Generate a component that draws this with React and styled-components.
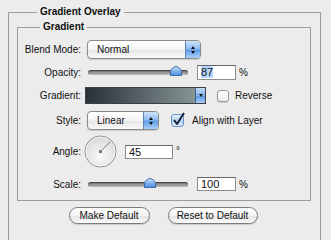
import React from "react";
import styled, { createGlobalStyle } from "styled-components";

const GlobalStyle = createGlobalStyle`
    html, body {
        margin: 0;
        padding: 0;
        background: #ececec;
        overflow: hidden;
    }
    body {
        padding-top: 5px;
        font-family: "Liberation Sans", Arial, sans-serif;
        font-size: 10px;
        color: #111;
    }
`

const Outer = styled.fieldset`
    box-sizing: border-box;
    width: 313px;
    height: 245px;
    margin: 0 0 0 8px;
    padding: 1px 9px 0 8px;
    border: 1px solid #9c9c9c;
    min-width: 0;
`

const Title = styled.legend`
    margin-left: ${p => p.$ml}px;
    padding: 0 3px;
    height: 14px;
    line-height: 14px;
    font-weight: bold;
    font-size: 10px;
`

const Inner = styled.fieldset`
    box-sizing: border-box;
    margin: 0;
    padding: 6px 0 9px 0;
    border: 1px solid #9c9c9c;
    min-width: 0;
`

const Row = styled.div`
    display: grid;
    grid-template-columns: 63px 1fr;
    column-gap: 6px;
    align-items: center;
    height: ${p => p.$h}px;
    margin-top: ${p => p.$mt || 0}px;
`

const Label = styled.span`
    text-align: right;
    white-space: nowrap;
`

const Controls = styled.div`
    display: flex;
    align-items: center;
    height: 100%;
`

const Popup = styled.div`
    box-sizing: border-box;
    display: flex;
    align-items: stretch;
    width: ${p => p.$w}px;
    height: 19px;
    border: 1px solid #8a8a8a;
    border-radius: 4px;
    overflow: hidden;
    background: linear-gradient(#ffffff, #f3f3f3 50%, #e6e6e6 52%, #f8f8f8);
    box-shadow: 0 1px 1px rgba(0, 0, 0, 0.15);
`

const PopupText = styled.span`
    flex: 1;
    padding-left: 9px;
    line-height: 17px;
`

const PopupArrows = styled.span`
    width: 14px;
    display: flex;
    flex-direction: column;
    align-items: center;
    justify-content: center;
    gap: 2px;
    border-left: 1px solid #5d82b8;
    background: linear-gradient(#cfe3fa, #8ab8ee 48%, #5d99e4 52%, #a9d0fa);
`

const Tri = styled.span`
    width: 0;
    height: 0;
    border-left: 2.5px solid transparent;
    border-right: 2.5px solid transparent;
    ${p => p.$up ? "border-bottom: 3px solid #111;" : "border-top: 3px solid #111;"}
`

const SliderBox = styled.div`
    position: relative;
    width: 100px;
    height: 5px;
    margin: 0 9px 0 1px;
    border-radius: 3px;
    background: linear-gradient(#6a6a6a, #9a9a9a 60%, #b9b9b9);
    box-shadow: inset 0 1px 1px rgba(0, 0, 0, 0.4);
`

const Thumb = styled.svg`
    position: absolute;
    top: -4px;
    width: 12px;
    height: 10px;
    margin-left: -6px;
`

const Field = styled.div`
    box-sizing: border-box;
    width: ${p => p.$w}px;
    height: ${p => p.$h || 15}px;
    padding-left: 3px;
    border: 1px solid #8c8c8c;
    border-top-color: #666;
    background: #fff;
    line-height: ${p => (p.$h || 15) - 2}px;
    font-size: 11px;
`

const Selected = styled.span`
    background: #b5d5ff;
`

const Unit = styled.span`
    margin-left: 3px;
    font-size: 10px;
    align-self: ${p => p.$top ? "flex-start" : "center"};
    margin-top: ${p => p.$top ? "10px" : "0"};
`

const Swatch = styled.div`
    box-sizing: border-box;
    display: flex;
    width: 121px;
    height: 17px;
    margin-left: -2px;
    border: 1px solid #3a3f44;
    background: linear-gradient(90deg, #283238, #5b676b 50%, #8f9d9c);
`

const SwatchArrow = styled.span`
    margin-left: auto;
    width: 9px;
    display: flex;
    align-items: center;
    justify-content: center;
    border-left: 1px solid #3a5d93;
    background: linear-gradient(#c4dcf8, #7fb0ea 50%, #5a96e2 52%, #a9cdf7);
`

const Check = styled.label`
    display: flex;
    align-items: center;
    gap: 6px;
    margin-left: ${p => p.$ml}px;
    white-space: nowrap;
`

const Box = styled.span`
    box-sizing: border-box;
    width: 12px;
    height: 12px;
    border: 1px solid #9a9a9a;
    border-radius: 3px;
    background: linear-gradient(#ffffff, #ececec);
    box-shadow: 0 1px 1px rgba(0, 0, 0, 0.12);
`

const Dial = styled.svg`
    width: 33px;
    height: 33px;
    margin-left: -3px;
    margin-right: 8px;
`

const Buttons = styled.div`
    display: flex;
    justify-content: center;
    gap: 18px;
    margin-top: 6px;
    padding-right: 2px;
`

const Button = styled.button`
    box-sizing: border-box;
    width: ${p => p.$w}px;
    height: 17px;
    padding: 0;
    border: 1px solid #7a7a7a;
    border-radius: 9px;
    background: linear-gradient(#ffffff, #f4f4f4 50%, #e4e4e4 52%, #fafafa);
    box-shadow: 0 1px 1px rgba(0, 0, 0, 0.15);
    font-family: "Liberation Sans", Arial, sans-serif;
    font-size: 10px;
    color: #111;
`

const Slider = ({ value }) => (
    <SliderBox>
        <Thumb viewBox="0 0 12 10" style={{ left: `${value}%` }}>
            <defs>
                <linearGradient id={`th${value}`} x1="0" y1="0" x2="0" y2="1">
                    <stop offset="0" stopColor="#d5e8fd" />
                    <stop offset="0.5" stopColor="#7fb3ee" />
                    <stop offset="1" stopColor="#4d8ee0" />
                </linearGradient>
            </defs>
            <path d="M6 0.5 C8 0.5 11.5 3.5 11.5 5 L11.5 9.5 L0.5 9.5 L0.5 5 C0.5 3.5 4 0.5 6 0.5 Z" fill={`url(#th${value})`} stroke="#3e6aa6" strokeWidth="1" />
        </Thumb>
    </SliderBox>
)

const Arrows = () => (
    <PopupArrows>
        <Tri $up />
        <Tri />
    </PopupArrows>
)

export default function App() {
    return (
        <>
            <GlobalStyle />
            <Outer>
                <Title $ml={20}>Gradient Overlay</Title>
                <Inner>
                    <Title $ml={22}>Gradient</Title>
                    <Row $h={19}>
                        <Label>Blend Mode:</Label>
                        <Controls>
                            <Popup $w={114}>
                                <PopupText>Normal</PopupText>
                                <Arrows />
                            </Popup>
                        </Controls>
                    </Row>
                    <Row $h={16} $mt={5}>
                        <Label>Opacity:</Label>
                        <Controls>
                            <Slider value={88} />
                            <Field $w={39}><Selected>87</Selected></Field>
                            <Unit>%</Unit>
                        </Controls>
                    </Row>
                    <Row $h={17} $mt={7}>
                        <Label>Gradient:</Label>
                        <Controls>
                            <Swatch>
                                <SwatchArrow><Tri /></SwatchArrow>
                            </Swatch>
                            <Check $ml={11}>
                                <Box />
                                Reverse
                            </Check>
                        </Controls>
                    </Row>
                    <Row $h={19} $mt={7}>
                        <Label>Style:</Label>
                        <Controls>
                            <Popup $w={72}>
                                <PopupText>Linear</PopupText>
                                <Arrows />
                            </Popup>
                            <Check $ml={12}>
                                <svg width="15" height="15" viewBox="0 0 15 15" style={{ marginTop: -2 }}>
                                    <defs>
                                        <linearGradient id="cb" x1="0" y1="0" x2="0" y2="1">
                                            <stop offset="0" stopColor="#e3eefb" />
                                            <stop offset="0.5" stopColor="#b8d4f3" />
                                            <stop offset="1" stopColor="#d8e8fa" />
                                        </linearGradient>
                                    </defs>
                                    <rect x="0.5" y="2.5" width="12" height="12" rx="2.5" fill="url(#cb)" stroke="#6b93c8" />
                                    <path d="M3 8 L6 12 L13 1" fill="none" stroke="#16233a" strokeWidth="2" strokeLinejoin="round" />
                                </svg>
                                Align with Layer
                            </Check>
                        </Controls>
                    </Row>
                    <Row $h={33} $mt={5}>
                        <Label>Angle:</Label>
                        <Controls>
                            <Dial viewBox="0 0 33 33">
                                <defs>
                                    <radialGradient id="dial" cx="0.5" cy="0.65" r="0.6">
                                        <stop offset="0" stopColor="#fbfbfb" />
                                        <stop offset="1" stopColor="#d9d9d9" />
                                    </radialGradient>
                                </defs>
                                <circle cx="16.5" cy="16.5" r="15.5" fill="url(#dial)" stroke="#8d8d8d" />
                                <circle cx="16.5" cy="16.5" r="14.5" fill="none" stroke="#ffffff" strokeOpacity="0.7" />
                                <line x1="16.5" y1="16.5" x2="26.5" y2="6.5" stroke="#6a6a6a" strokeWidth="0.8" />
                                <rect x="15" y="15" width="3" height="3" fill="#7a7a7a" />
                            </Dial>
                            <Field $w={48} $h={14}>45</Field>
                            <Unit $top>°</Unit>
                        </Controls>
                    </Row>
                    <Row $h={14} $mt={9}>
                        <Label>Scale:</Label>
                        <Controls>
                            <Slider value={62} />
                            <Field $w={39} $h={14}>100</Field>
                            <Unit>%</Unit>
                        </Controls>
                    </Row>
                </Inner>
                <Buttons>
                    <Button $w={81}>Make Default</Button>
                    <Button $w={90}>Reset to Default</Button>
                </Buttons>
            </Outer>
        </>
    );
}
